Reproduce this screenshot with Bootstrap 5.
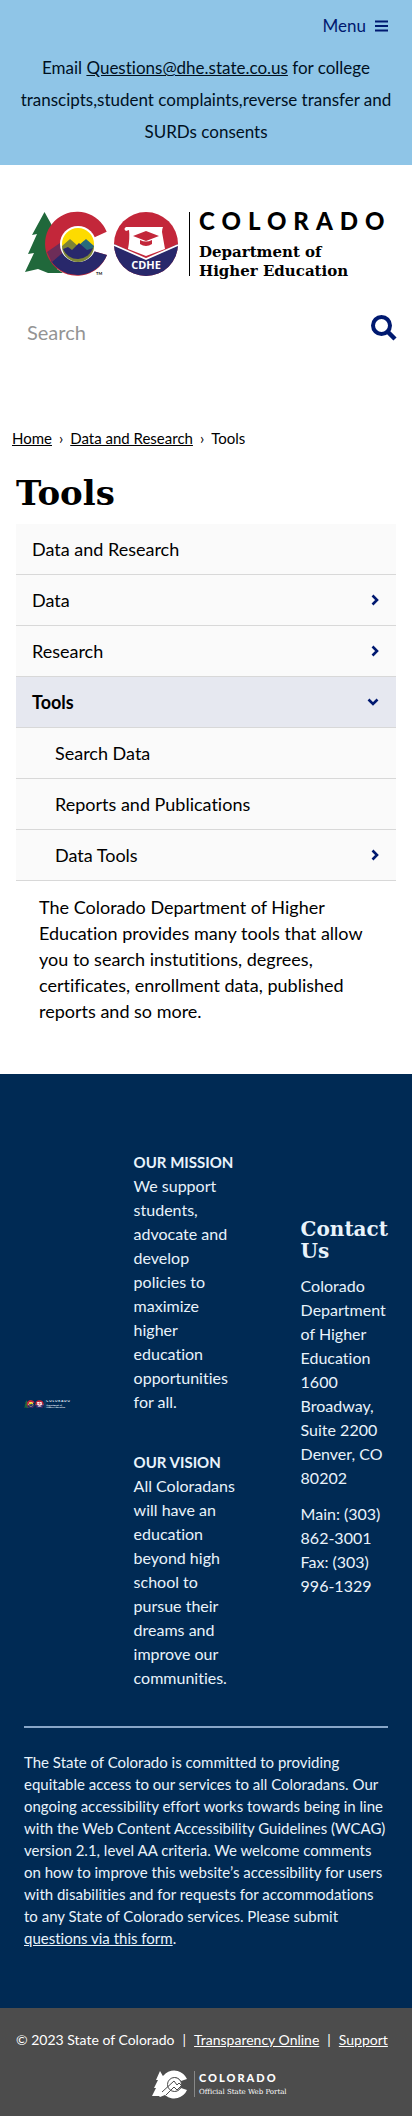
<!DOCTYPE html>
<html lang="en">
<head>
<meta charset="utf-8">
<meta name="viewport" content="width=device-width, initial-scale=1">
<title>Tools | Colorado Department of Higher Education</title>
<link href="https://cdn.jsdelivr.net/npm/bootstrap@5.3.0/dist/css/bootstrap.min.css" rel="stylesheet">
<style>
  :root { --navy: #002a54; --sky: #8fc5e7; --royal: #001970; }
  body { font-family: Lato, "Liberation Sans", sans-serif; font-size: 18px; line-height: 26px; color: #000; font-variant-ligatures: none; }
  .slab { font-family: "DejaVu Serif", serif; font-weight: 700; }
  .notice-bar { background: var(--sky); padding-bottom: 17px; }
  .menu-toggle { color: var(--royal); font-size: 17px; line-height: 20px; border: 0; }
  .notice-text { font-size: 17px; line-height: 32px; color: #00101f; }
  .site-logo { width: 100%; height: auto; display: block; }
  .masthead { padding: 46px 22px 0 24px; }
  .search-row { padding: 34px 15px 0 27px; }
  .search-row input { font-size: 20px; height: 34px; color: #333; }
  .search-row input::placeholder { color: #949494; }
  .crumbs { font-size: 15px; line-height: 20px; margin-top: 79px; --bs-breadcrumb-divider: "›"; --bs-breadcrumb-divider-color: #000; --bs-breadcrumb-item-padding-x: 7px; --bs-breadcrumb-item-active-color: #000; }
  .page-title { font-size: 34px; line-height: 42px; padding-bottom: 10px; }
  .side-menu .list-group-item { display: flex; align-items: center; justify-content: space-between; height: 51px; padding: 0 17px 0 16px; background: #fafafa; color: #000; border: 0; border-bottom: 1px solid #d8d8d8; }
  .side-menu .list-group-item.current { background: #e6e8f0; font-weight: 700; }
  .side-menu .list-group-item.sub-item { padding-left: 39px; }
  .side-menu svg { color: var(--royal); }
  .intro { padding: 13px 38px 50px 39px; }
  .site-footer { background: var(--navy); color: #e9f3fb; font-size: 16px; line-height: 24px; padding: 76px 24px 59px; }
  .footer-grid { display: grid; grid-template-columns: 13fr 29fr 24fr; column-gap: 63px; align-items: center; }
  .footer-grid strong { font-size: 15px; white-space: nowrap; }
  .footer-logo { padding-bottom: 32px; }
  .vision { margin-top: 36px; }
  .contact-title { font-size: 20px; line-height: 22px; }
  .footer-rule { border-top: 2px solid #88a6c8; opacity: 1; margin: 36px 0 23px; }
  .access-note { font-size: 15px; line-height: 22px; }
  .legal-bar { background: #4c4c4c; color: #fff; font-size: 14px; line-height: 20px; padding: 22px 16px 16px; }
  .portal-mark { padding-left: 32px; margin-top: 20px; }
</style>
</head>
<body>
<svg class="d-none" aria-hidden="true">
  <symbol id="chev" viewBox="0 0 8 12"><path d="M1.500 1.500 6 6l-4.500 4.500" fill="none" stroke="currentColor" stroke-width="2.600"/></symbol>
  <symbol id="logo" viewBox="0 0 366 70">
    <path d="M20.500 1 31 20 33 58 39 62 24 62 14 58 1 61 10 42 4 43 13 23 8 24z" fill="#20683b"/>
    <path d="M82.700 20.700A32 32 0 1 0 83 44L69 40A17 17 0 1 1 69 27z" fill="#c3273a"/>
    <path d="M83 44A32 32 0 0 1 27 50L42 40 54 50 69 40z" fill="#28286b"/>
    <path d="M23 41 36 32 43 42 28 52z" fill="#6d2d58"/>
    <path d="M28 51 43 38 55 50 44 63z" fill="#28286b"/>
    <circle cx="54" cy="33" r="18" fill="#fff"/>
    <circle cx="54" cy="33" r="16" fill="#fddb00"/>
    <path d="M38 35 46 28 54 35 60 30 70 35A16 16 0 0 1 38 35z" fill="#7d8436"/>
    <path d="M54 35 62 28 70 35 65 43 53 40z" fill="#286a7b"/>
    <path d="M39 38 44 36 48 39 55 32 63 39 69 37A16 16 0 0 1 39 38z" fill="#28286b"/>
    <text x="72" y="64" font-family="Lato, sans-serif" font-size="4" font-weight="700" fill="currentColor">TM</text>
    <circle cx="122" cy="33" r="32" fill="#c3273a"/>
    <path d="M90 33 122 48 154 33A32 32 0 0 1 90 33z" fill="#28286b"/>
    <path d="M90 34 122 48 154 34" fill="none" stroke="#fff" stroke-width="1.800"/>
    <path d="M102 16h37q-1 2-1 5l3 17-19 7-18-7q2-11 1-19l-3 1q-3-2 0-4z" fill="#fff"/>
    <path d="M109 25 122 20 135 25 122 30zM116 29q6 3 12 0v4q-6 4-12 0z" fill="#c3273a"/>
    <text x="122" y="58" text-anchor="middle" font-family="Noto Sans, sans-serif" font-size="11" font-weight="700" fill="#fff">CDHE</text>
    <path d="M165.500 1v64" stroke="currentColor"/>
    <text x="175" y="19" font-family="Lato, sans-serif" font-size="24" font-weight="900" letter-spacing="7" fill="currentColor">COLORADO</text>
    <g font-family="DejaVu Serif, serif" font-size="15" font-weight="700" fill="currentColor">
      <text x="175" y="46">Department of</text><text x="175" y="65">Higher Education</text>
    </g>
  </symbol>
</svg>

<header>
  <div class="notice-bar">
    <div class="d-flex justify-content-end px-4 pt-3 pb-3">
      <button class="menu-toggle bg-transparent p-0 d-flex align-items-center gap-2" type="button">Menu
        <svg width="14" height="12" viewBox="0 0 14 12" aria-hidden="true"><path d="M1 1.500h13M1 6h13M1 10.500h13" stroke="currentColor" stroke-width="2"/></svg>
      </button>
    </div>
    <p class="notice-text text-center mb-0 px-3">Email <a class="text-reset" href="mailto:Questions@dhe.state.co.us">Questions@dhe.state.co.us</a> for college transcipts,student complaints,reverse transfer and SURDs consents</p>
  </div>
  <div class="masthead">
    <a href="#" class="text-black"><svg class="site-logo" viewBox="0 0 366 70" role="img" aria-label="Colorado Department of Higher Education"><use href="#logo"/></svg></a>
  </div>
  <form class="search-row d-flex align-items-start" role="search">
    <label class="visually-hidden" for="site-search">Search</label>
    <input class="form-control border-0 p-0" id="site-search" type="search" placeholder="Search">
    <button class="btn border-0 p-0 lh-1" type="submit" aria-label="Submit search">
      <svg width="26" height="26" viewBox="0 0 26 26" aria-hidden="true"><circle cx="10.500" cy="10.500" r="8.500" fill="none" stroke="#001970" stroke-width="4"/><path d="m16.500 16.500 7.500 7.500" stroke="#001970" stroke-width="4.500"/></svg>
    </button>
  </form>
</header>

<main>
  <nav aria-label="Breadcrumb">
    <ol class="crumbs breadcrumb mb-0 px-2 mx-1">
      <li class="breadcrumb-item"><a class="text-black" href="#">Home</a></li>
      <li class="breadcrumb-item"><a class="text-black" href="#">Data and Research</a></li>
      <li class="breadcrumb-item active" aria-current="page">Tools</li>
    </ol>
  </nav>
  <h1 class="page-title slab px-3 mt-4 mb-0">Tools</h1>
  <nav class="side-menu list-group rounded-0 mx-3" aria-label="Section">
    <a class="list-group-item" href="#">Data and Research</a>
    <a class="list-group-item" href="#">Data <svg width="8" height="12" aria-hidden="true"><use href="#chev"/></svg></a>
    <a class="list-group-item" href="#">Research <svg width="8" height="12" aria-hidden="true"><use href="#chev"/></svg></a>
    <a class="list-group-item current" href="#">Tools <svg width="12" height="8" viewBox="0 0 12 8" aria-hidden="true"><path d="M1.500 1.500 6 6l4.500-4.500" fill="none" stroke="currentColor" stroke-width="2.600"/></svg></a>
    <a class="list-group-item sub-item" href="#">Search Data</a>
    <a class="list-group-item sub-item" href="#">Reports and Publications</a>
    <a class="list-group-item sub-item" href="#">Data Tools <svg width="8" height="12" aria-hidden="true"><use href="#chev"/></svg></a>
  </nav>
  <p class="intro mb-0">The Colorado Department of Higher Education provides many tools that allow you to search instutitions, degrees, certificates, enrollment data, published reports and so more.</p>
</main>

<footer>
  <div class="site-footer">
    <div class="footer-grid">
      <div class="footer-logo"><svg class="site-logo" viewBox="0 0 366 70" role="img" aria-label="Colorado Department of Higher Education"><use href="#logo"/></svg></div>
      <div>
        <p class="mb-0"><strong>OUR MISSION</strong><br>We support students, advocate and develop policies to maximize higher education opportunities for all.</p>
        <p class="vision mb-0"><strong>OUR VISION</strong><br>All Coloradans will have an education beyond high school to pursue their dreams and improve our communities.</p>
      </div>
      <div class="pb-4">
        <h2 class="contact-title slab mb-2 pb-1">Contact Us</h2>
        <p class="mb-2 pb-1">Colorado Department of Higher Education<br>1600 Broadway, Suite 2200<br>Denver, CO 80202</p>
        <p class="mb-0">Main: (303) 862-3001<br>Fax: (303) 996-1329</p>
      </div>
    </div>
    <hr class="footer-rule">
    <p class="access-note mb-0">The State of Colorado is committed to providing equitable access to our services to all Coloradans. Our ongoing accessibility effort works towards being in line with the Web Content Accessibility Guidelines (WCAG) version 2.1, level AA criteria. We welcome comments on how to improve this website’s accessibility for users with disabilities and for requests for accommodations to any State of Colorado services. Please submit <a class="text-reset" href="#">questions via this form</a>.</p>
  </div>
  <div class="legal-bar">
    <div class="d-flex gap-2">
      <span>© 2023 State of Colorado</span><span>|</span><a class="text-reset" href="#">Transparency Online</a><span>|</span><a class="text-reset" href="#">Support</a>
    </div>
    <div class="portal-mark d-flex justify-content-center">
      <svg width="140" height="32" viewBox="0 0 140 32" role="img" aria-label="Colorado Official State Web Portal">
        <path d="M8 1 12 8l1 17-5 2-1-1H0l4-8H2l4-8H4z" fill="#fff"/>
        <path d="M35 9A14 14 0 1 0 35 20L29 18A7 7 0 1 1 29 11z" fill="#fff"/>
        <circle cx="22.500" cy="14.500" r="7" fill="#fff" stroke="#4c4c4c"/>
        <path d="m10 22 12-11 3 4 2-2 4 4M14 25l8-8 3 3 4-4" fill="none" stroke="#4c4c4c"/>
        <path d="M42.500 1v26" stroke="#888"/>
        <text x="47" y="12" font-family="Lato, sans-serif" font-size="11" font-weight="900" letter-spacing="2" fill="#fff">COLORADO</text>
        <text x="47" y="24" font-family="DejaVu Serif, serif" font-size="7" fill="#fff">Official State Web Portal</text>
      </svg>
    </div>
  </div>
</footer>
<script src="https://cdn.jsdelivr.net/npm/bootstrap@5.3.0/dist/js/bootstrap.bundle.min.js"></script>
</body>
</html>
